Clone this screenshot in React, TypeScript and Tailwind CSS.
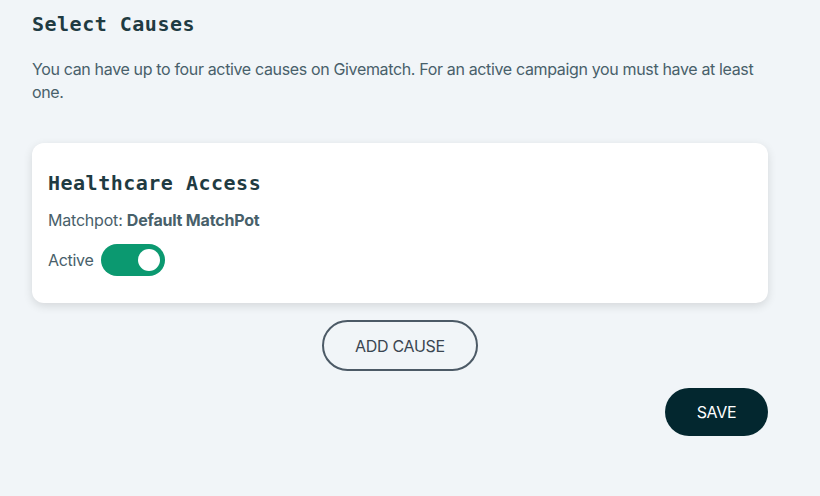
export default function App() {
  return (
    <div className="min-h-[496px] w-[820px] bg-[#f1f5f8] px-8 pt-[10px]" style={{ fontFamily: "Inter, 'Noto Sans', sans-serif" }}>
      <div className="w-[736px] flex flex-col">
        <h1 className="text-[20px] leading-[28px] font-bold tracking-[0.5px] text-[#1f3b42]" style={{ fontFamily: "'DejaVu Sans Mono', 'Liberation Mono', monospace" }}>
          Select Causes
        </h1>
        <p className="mt-[20px] text-[16px] leading-[23px] tracking-[-0.35px] text-[#48606a] pr-[10px]">
          You can have up to four active causes on Givematch. For an active campaign you must have at least one.
        </p>
        <div className="mt-[39px] h-[160px] rounded-xl bg-white shadow-[0_3px_10px_rgba(0,0,0,0.12)] px-4 pt-[26px]">
          <h2 className="text-[20px] leading-[28px] font-bold tracking-[0.5px] text-[#1f3b42]" style={{ fontFamily: "'DejaVu Sans Mono', 'Liberation Mono', monospace" }}>
            Healthcare Access
          </h2>
          <div className="mt-[12px] text-[16px] leading-[22px] tracking-[-0.2px] text-[#48606a]">
            Matchpot: <span className="font-bold">Default MatchPot</span>
          </div>
          <div className="mt-[13px] flex items-center gap-[7px]">
            <span className="text-[16px] leading-[22px] tracking-[-0.3px] text-[#48606a]">Active</span>
            <div className="w-[64px] h-[32px] rounded-full bg-[#0b9970] flex items-center justify-end pr-[5px]">
              <div className="w-[22px] h-[22px] rounded-full bg-white" />
            </div>
          </div>
        </div>
        <div className="mt-[17px] flex justify-center">
          <button className="w-[156px] h-[51px] rounded-full border-2 border-[#4c5a66] text-[16px] tracking-[-0.3px] text-[#3a4651]">
            ADD CAUSE
          </button>
        </div>
        <div className="mt-[17px] flex justify-end">
          <button className="w-[103px] h-[48px] rounded-full bg-[#03272f] text-[16px] tracking-[-0.3px] text-white">
            SAVE
          </button>
        </div>
      </div>
    </div>
  );
}
